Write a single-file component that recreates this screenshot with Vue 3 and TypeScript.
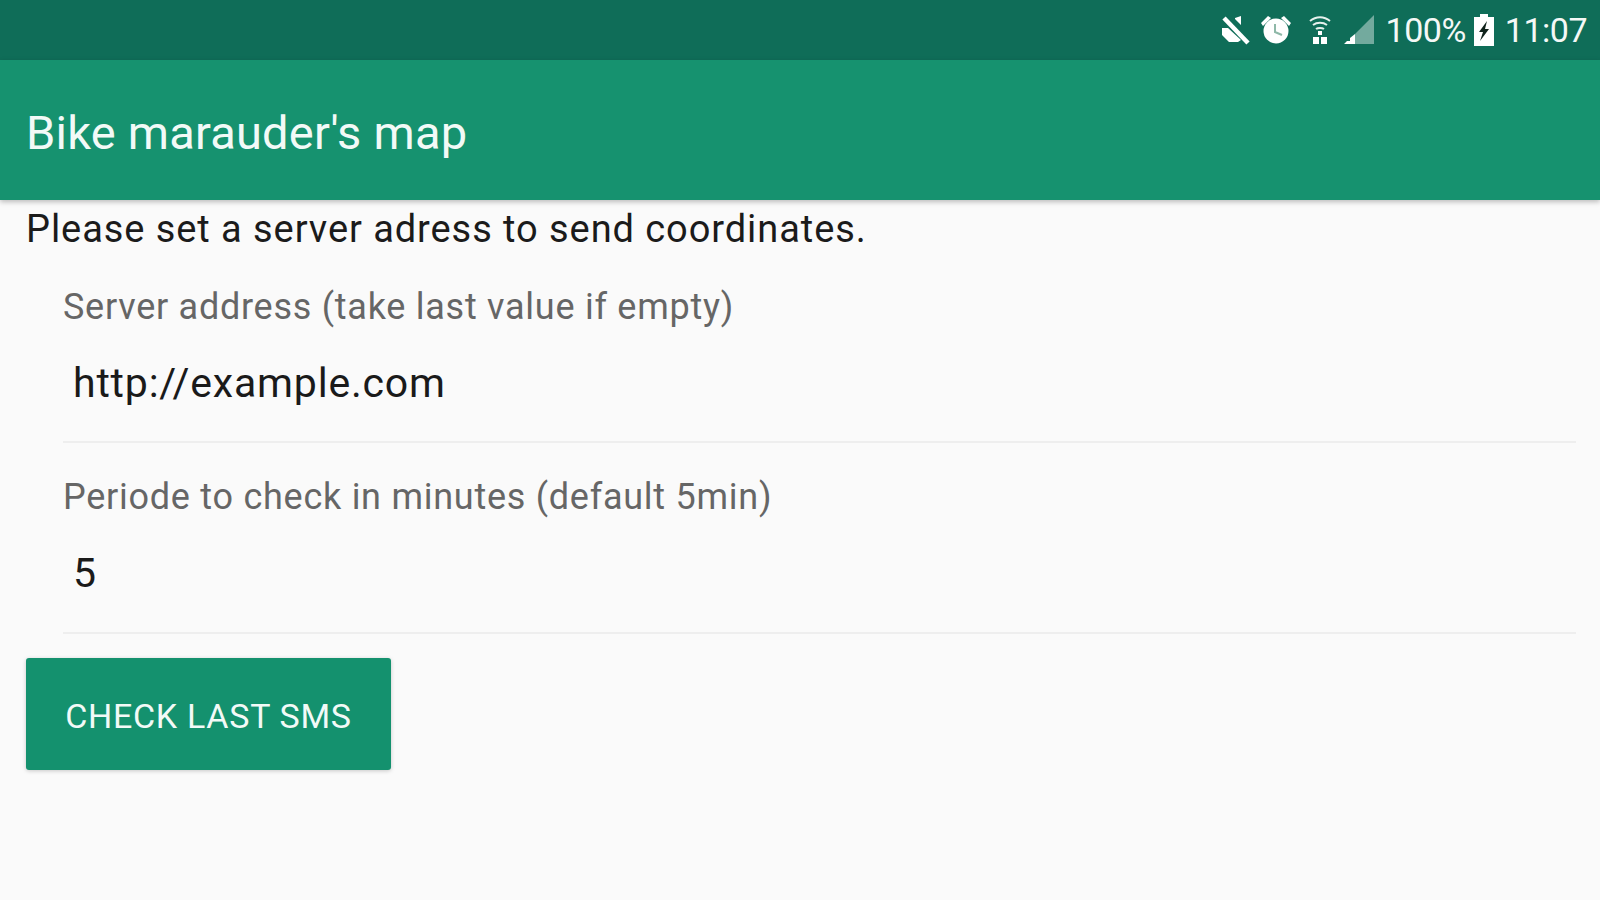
<template>
  <div class="screen">
    <div class="status-bar">
      <svg class="icon icon--mute" viewBox="0 0 30 32" width="30" height="32">
        <path fill="#fff" d="M15 4l6-2v9l-6-6zM2 14h6l13 12-3 2H9l-7-7z" />
        <path d="M4 4l24 25" fill="none" stroke="#fff" stroke-width="4.500" />
      </svg>
      <svg class="icon icon--alarm" viewBox="0 0 32 32" width="32" height="32">
        <circle cx="16" cy="17" r="12.500" fill="#fff" />
        <path d="M1 9l7-7 3 2-8 8zM31 9l-7-7-3 2 8 8z" fill="#fff" />
        <path d="M15 10v8l7 3" fill="none" stroke="#8fb8a8" stroke-width="2" />
      </svg>
      <svg class="icon icon--wifi" viewBox="0 0 24 32" width="24" height="32">
        <path d="M2 7c6-5 14-5 20 0M5 11c4-3 10-3 14 0M8 15c2-1.500 6-1.500 8 0" fill="none" stroke="#e6f1ed" stroke-width="2" />
        <path d="M10 17h4v4h-4zM5 23h6v7H5zM13 23h6v7h-6z" fill="#fff" />
      </svg>
      <svg class="icon icon--signal" viewBox="0 0 32 32" width="32" height="32">
        <path d="M12 20L31 1v29H12z" fill="#fff" opacity=".42" />
        <path d="M1 30l3-3h3v3zM7 24l5-4v10H7z" fill="#fff" />
      </svg>
      <span class="status-bar__pct">100%</span>
      <svg class="icon icon--battery" viewBox="0 0 22 34" width="22" height="34">
        <path fill="#fff" d="M7 1h8v3h6v29H1V4h6z" />
        <path fill="#10221b" d="M14 8l-8 11h4l-3 9 9-12h-4z" />
      </svg>
      <span class="status-bar__time">11:07</span>
    </div>

    <header class="app-bar">
      <h1 class="app-bar__title">Bike marauder's map</h1>
    </header>

    <main class="content">
      <p class="intro">Please set a server adress to send coordinates.</p>

      <div v-for="field in fields" :key="field.label" class="field">
        <label class="field__label">{{ field.label }}</label>
        <div class="field__value">{{ field.value }}</div>
      </div>

      <button type="button" class="action">CHECK LAST SMS</button>
    </main>
  </div>
</template>

<script setup lang="ts">
interface Field {
  label: string
  value: string
}

const fields: Field[] = [
  { label: 'Server address (take last value if empty)', value: 'http://example.com' },
  { label: 'Periode to check in minutes (default 5min)', value: '5' },
]
</script>

<style>
html,
body {
  margin: 0;
  background: #fafafa;
}
</style>

<style scoped>
.screen {
  width: 1600px;
  height: 900px;
  overflow: hidden;
  background: #fafafa;
  font-family: Roboto, "Liberation Sans", sans-serif;
}

.status-bar {
  height: 60px;
  box-sizing: border-box;
  padding-right: 13px;
  display: flex;
  align-items: center;
  justify-content: flex-end;
  background: #0f6d58;
  color: #f4f8f6;
  font-size: 34px;
}

.icon {
  flex: none;
}

.icon--mute {
  margin-right: 10px;
}

.icon--alarm {
  margin-right: 16px;
}

.icon--wifi {
  margin-right: 11px;
}

.icon--signal {
  margin-right: 11px;
}

.status-bar__pct {
  letter-spacing: -0.5px;
  margin-right: 7px;
}

.status-bar__time {
  letter-spacing: -0.5px;
}

.icon--battery {
  margin-right: 10px;
}

.app-bar {
  height: 140px;
  box-sizing: border-box;
  padding: 5px 0 0 26px;
  display: flex;
  align-items: center;
  background: #16926f;
  box-shadow: 0 2px 5px rgba(0, 0, 0, 0.25);
  position: relative;
}

.app-bar__title {
  margin: 0;
  color: #f2faf7;
  font-size: 47px;
  font-weight: 400;
  letter-spacing: 0.22px;
}

.content {
  padding: 7px 24px 0 26px;
}

.intro {
  margin: 0 0 1px;
  color: #1b1b1b;
  font-size: 38px;
  line-height: 44px;
  letter-spacing: 0.93px;
}

.field {
  margin-left: 37px;
  border-bottom: 2px solid #eeeeee;
  padding-top: 33px;
  height: 191px;
  box-sizing: border-box;
}

.field + .field {
  padding-top: 32px;
}

.field__label {
  display: block;
  color: #666666;
  font-size: 36px;
  line-height: 44px;
  letter-spacing: 0.74px;
}

.field__value {
  padding: 31px 0 0 10px;
  color: #1a1a1a;
  font-size: 41px;
  line-height: 46px;
  letter-spacing: 0.8px;
}

.action {
  display: block;
  margin-top: 24px;
  width: 365px;
  height: 112px;
  border: none;
  border-radius: 3px;
  padding: 4px 0 0;
  background: #14916e;
  color: #f2faf7;
  font-family: inherit;
  font-size: 34px;
  letter-spacing: 0.7px;
  box-shadow: 0 1px 4px rgba(0, 0, 0, 0.2);
}
</style>
